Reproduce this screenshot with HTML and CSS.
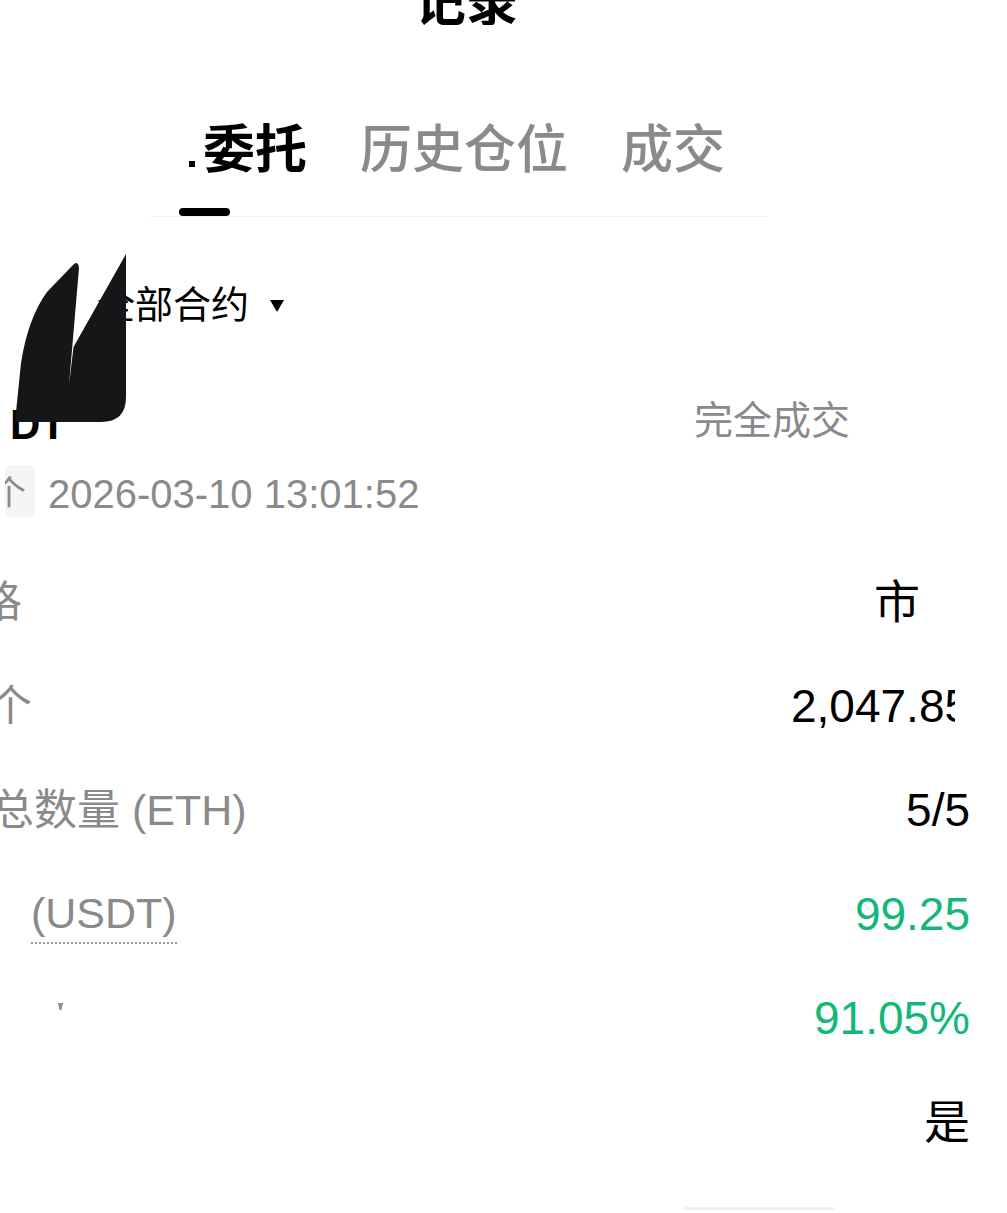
FILE: index.html
```html
<!DOCTYPE html>
<html lang="zh-CN">
<head>
<meta charset="utf-8">
<title>记录</title>
<link rel="stylesheet" href="styles.css">
</head>
<body>
<div class="page">
  <header class="topbar"><h1 class="title">记录</h1></header>

  <nav class="tabs">
    <div class="tab-labels">
      <span class="tab active"><i class="tab-frag"></i>委托</span>
      <span class="tab">历史仓位</span>
      <span class="tab">成交</span>
    </div>
    <div class="tab-indicator"></div>
  </nav>

  <div class="filter">
    <span class="filter-label">全部合约</span>
    <span class="caret"></span>
  </div>

  <section class="order">
    <div class="order-head">
      <span class="symbol">DT</span>
      <span class="status">完全成交</span>
    </div>
    <div class="order-meta">
      <span class="tag"><span class="tag-text">个</span></span>
      <span class="time">2026-03-10 13:01:52</span>
    </div>

    <dl class="fields">
      <div class="field">
        <dt class="label cut-a">格</dt>
        <dd class="value value-type">市</dd>
      </div>
      <div class="field">
        <dt class="label cut-b">个</dt>
        <dd class="value value-clip">2,047.85</dd>
      </div>
      <div class="field">
        <dt class="label cut-c">总数量 (ETH)</dt>
        <dd class="value">5/5</dd>
      </div>
      <div class="field">
        <dt class="label dotted">(USDT)</dt>
        <dd class="value up">99.25</dd>
      </div>
      <div class="field">
        <dt class="label-mark"></dt>
        <dd class="value up">91.05%</dd>
      </div>
      <div class="field">
        <dt class="label"></dt>
        <dd class="value">是</dd>
      </div>
    </dl>
  </section>

  <div class="home-line"></div>

  <svg class="mask" width="130" height="175" viewBox="0 0 130 175" aria-hidden="true">
    <path d="M15 172 L21 113 Q28 68 47 42 L73 15 Q78 10 79 18 L69 135 L73.5 97 L126 4 L126 147 Q126 172 101 172 Z" fill="#151617"/>
  </svg>
</div>
</body>
</html>
```

FILE: styles.css
```css
* {
  box-sizing: border-box;
  margin: 0;
  padding: 0;
}

html, body {
  background: #fff;
}

body {
  width: 1007px;
  height: 1213px;
  overflow: hidden;
  font-family: "Liberation Sans", "Noto Sans CJK SC", sans-serif;
  color: #000;
}

.page {
  position: relative;
  height: 1213px;
  overflow: hidden;
}

/* top title, mostly scrolled out of view */
.topbar {
  height: 25px;
  display: flex;
  align-items: flex-end;
  padding-left: 414px;
  overflow: hidden;
}

.title {
  flex-shrink: 0;
  font-family: "Noto Sans CJK SC", sans-serif;
  font-size: 52px;
  line-height: 52px;
  font-weight: 700;
}

/* tabs */
.tabs {
  margin: 91px 0 0 150px;
  width: 617px;
  border-bottom: 1px solid #f0f0f0;
}

.tab-labels {
  display: flex;
  gap: 53px;
  padding-left: 39px;
}

.tab {
  display: flex;
  align-items: flex-end;
  font-family: "Noto Sans CJK SC", sans-serif;
  font-size: 52px;
  line-height: 60px;
  font-weight: 500;
  color: #8a8a8a;
}

.tab.active {
  color: #000;
  font-weight: 700;
}

.tab-frag {
  display: block;
  width: 6px;
  height: 6px;
  background: #000;
  margin: 0 8px 9px 0;
}

.tab-indicator {
  width: 51px;
  height: 8px;
  border-radius: 4px;
  background: #000;
  margin: 32px 0 0 29px;
}

/* filter */
.filter {
  display: flex;
  align-items: center;
  height: 48px;
  margin-top: 61px;
  padding-left: 97px;
}

.filter-label {
  font-family: "Noto Sans CJK SC", sans-serif;
  font-size: 38px;
  line-height: 48px;
}

.caret {
  width: 0;
  height: 0;
  border-left: 7.5px solid transparent;
  border-right: 7.5px solid transparent;
  border-top: 12px solid #000;
  margin: 8px 0 0 21px;
}

/* order card */
.order {
  margin-top: 67px;
}

.order-head {
  display: flex;
  justify-content: space-between;
  align-items: flex-start;
  height: 48px;
}

.symbol {
  font-size: 42px;
  line-height: 48px;
  font-weight: 700;
  margin: 8px 0 0 10px;
}

.status {
  font-family: "Noto Sans CJK SC", sans-serif;
  font-size: 39px;
  line-height: 48px;
  color: #8a8a8a;
  margin-right: 157px;
}

.order-meta {
  display: flex;
  align-items: flex-start;
  height: 52px;
  margin-top: 24px;
  padding-left: 5px;
}

.tag {
  display: flex;
  align-items: center;
  width: 30px;
  height: 52px;
  background: #f5f5f5;
  border-radius: 6px;
  overflow: hidden;
}

.tag-text {
  flex-shrink: 0;
  font-family: "Noto Sans CJK SC", sans-serif;
  font-size: 34px;
  line-height: 1;
  color: #8a8a8a;
  margin-left: -13px;
}

.time {
  font-size: 40px;
  line-height: 52px;
  color: #8a8a8a;
  margin: 3px 0 0 13px;
}

/* detail rows */
.fields {
  margin-top: 33px;
}

.field {
  display: flex;
  justify-content: space-between;
  align-items: center;
  height: 104px;
  padding-right: 37px;
}

.label {
  font-size: 43px;
  line-height: 56px;
  color: #8a8a8a;
  white-space: nowrap;
}

.cut-a { margin-left: -21px; }
.cut-b { margin-left: -11px; }
.cut-c { margin-left: -9px; }

.dotted {
  margin-left: 31px;
  border-bottom: 2px dotted #9a9a9a;
  line-height: 58px;
}

.label-mark {
  align-self: flex-start;
  width: 5px;
  height: 7px;
  margin: 37px 0 0 58px;
  background: #8f8f8f;
  clip-path: polygon(0 0, 100% 0, 70% 100%, 30% 100%);
}

.value {
  font-size: 46px;
  line-height: 56px;
  color: #000;
  white-space: nowrap;
}

.value.up {
  color: #12b877;
}

.value-type {
  margin-right: 50px;
}

.value-clip {
  width: 164px;
  overflow: hidden;
  margin-right: 15px;
}

.home-line {
  width: 150px;
  height: 3px;
  margin: 33px 0 0 684px;
  border-radius: 2px;
  background: #f0f0f0;
}

/* dark blot lying over the filter row */
.mask {
  position: absolute;
  left: 0;
  top: 250px;
}
```
